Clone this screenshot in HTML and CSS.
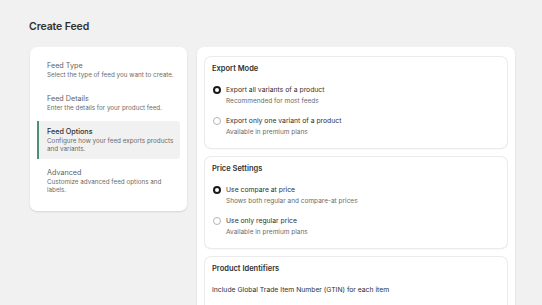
FILE: index.html
```html
<!DOCTYPE html>
<html lang="en">
<head>
  <meta charset="UTF-8">
  <title>Create Feed</title>
  <link rel="stylesheet" href="styles.css">
</head>
<body>
  <h1 class="page-title">Create Feed</h1>

  <div class="layout">
    <div class="card sidebar">
      <div class="step">
        <div class="step-title">Feed Type</div>
        <div class="step-desc">Select the type of feed you want to create.</div>
      </div>
      <div class="step">
        <div class="step-title">Feed Details</div>
        <div class="step-desc">Enter the details for your product feed.</div>
      </div>
      <div class="step active">
        <div class="step-title">Feed Options</div>
        <div class="step-desc">Configure how your feed exports products and variants.</div>
      </div>
      <div class="step">
        <div class="step-title">Advanced</div>
        <div class="step-desc">Customize advanced feed options and labels.</div>
      </div>
    </div>

    <div class="card main">
      <div class="section">
        <h3>Export Mode</h3>
        <div class="option">
          <div class="option-row"><span class="radio checked"></span>Export all variants of a product</div>
          <div class="option-help">Recommended for most feeds</div>
        </div>
        <div class="option">
          <div class="option-row"><span class="radio"></span>Export only one variant of a product</div>
          <div class="option-help">Available in premium plans</div>
        </div>
      </div>

      <div class="section">
        <h3>Price Settings</h3>
        <div class="option">
          <div class="option-row"><span class="radio checked"></span>Use compare at price</div>
          <div class="option-help">Shows both regular and compare-at prices</div>
        </div>
        <div class="option">
          <div class="option-row"><span class="radio"></span>Use only regular price</div>
          <div class="option-help">Available in premium plans</div>
        </div>
      </div>

      <div class="section">
        <h3>Product Identifiers</h3>
        <p class="section-text">Include Global Trade Item Number (GTIN) for each item</p>
        <div class="option">
          <div class="option-row"><span class="radio checked"></span>Include GTIN</div>
          <div class="option-help">Recommended for most feeds</div>
        </div>
      </div>
    </div>
  </div>
</body>
</html>
```

FILE: styles.css
```css
body {
  font-family: Inter, "Noto Sans", sans-serif;
  background: #f1f1f1;
  margin: 0;
  padding: 20px 27px 0 29px;
  color: #303030;
}
.page-title {
  font-size: 10.5px;
  font-weight: 600;
  letter-spacing: -0.1px;
  line-height: 14px;
  margin: 0 0 13px;
  color: #303030;
}
.layout {
  display: grid;
  grid-template-columns: 158px 1fr;
  gap: 10px;
  align-items: start;
}
.card {
  background: #fff;
  border-radius: 7px;
  box-shadow: 0 1px 2px rgba(0,0,0,0.12);
}
.sidebar {
  padding: 8px 7px 11px 7px;
  margin-left: 1px;
}
.step {
  padding: 6px 4px 6px 8px;
  margin-bottom: 3px;
  border-left: 2px solid transparent;
  border-radius: 3px;
}
.step:last-child {
  margin-bottom: 0;
}
.step.active {
  background: #f1f1f1;
  border-left-color: #4d8f76;
  border-radius: 0 3px 3px 0;
}
.step-title {
  font-size: 7.2px;
  line-height: 10px;
  color: #616161;
}
.step.active .step-title {
  color: #303030;
  font-weight: 500;
}
.step-desc {
  font-size: 6.3px;
  line-height: 8px;
  color: #6b6b6b;
}
.main {
  padding: 10px 8px 8px 8px;
  display: flex;
  flex-direction: column;
  gap: 9px;
}
.section {
  border-radius: 6px;
  box-shadow: 0 0 0 1px #ebebeb, 0 1px 2px rgba(0,0,0,0.08);
  padding: 7px 7px 11px;
}
.section h3 {
  font-size: 7.5px;
  font-weight: 600;
  line-height: 10px;
  margin: 0 0 11px;
  color: #303030;
}
.section-text {
  font-size: 6.8px;
  line-height: 10px;
  margin: 0 0 11px;
  color: #303030;
}
.option + .option {
  margin-top: 10px;
}
.option-row {
  display: flex;
  align-items: center;
  gap: 5px;
  font-size: 6.8px;
  line-height: 10px;
  color: #303030;
}
.radio {
  width: 8px;
  height: 8px;
  margin-left: 1px;
  box-sizing: border-box;
  border-radius: 50%;
  border: 1px solid #b5b5b5;
  flex: none;
}
.radio.checked {
  border: 2.4px solid #1a1a1a;
}
.option-help {
  font-size: 6.5px;
  line-height: 9px;
  margin-top: 2px;
  padding-left: 14px;
  color: #6b6b6b;
}
```
